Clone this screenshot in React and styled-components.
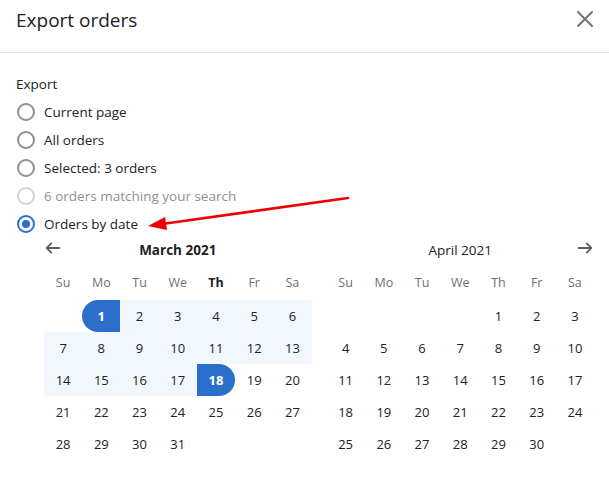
import React from 'react';
import styled, { createGlobalStyle, css } from 'styled-components';

const GlobalStyle = createGlobalStyle`
  body {
    margin: 0;
    background: #fff;
    font-family: "Open Sans", "Noto Sans", sans-serif;
    color: #202223;
  }
`;

const Modal = styled.div`
  position: relative;
  width: 609px;
  height: 484px;
  background: #fff;
  overflow: hidden;
`;

const Header = styled.div`
  display: flex;
  align-items: center;
  justify-content: space-between;
  height: 53px;
  padding: 0 16px;
  border-bottom: 1px solid #e1e3e5;
  box-sizing: border-box;
`;

const Title = styled.h2`
  margin: 0;
  font-size: 19px;
  font-weight: 400;
  color: #202223;
  line-height: 24px;
  margin-top: -13px;
`;

const CloseButton = styled.button`
  border: 0;
  background: none;
  padding: 0;
  width: 16px;
  height: 16px;
  margin-top: -15px;
  cursor: pointer;
  display: flex;
`;

const Body = styled.div`
  padding: 21px 15px 0 16px;
`;

const Label = styled.div`
  font-size: 13.5px;
  line-height: 20px;
  margin-bottom: 4px;
`;

const ChoiceList = styled.div`
  display: flex;
  flex-direction: column;
`;

const Choice = styled.label`
  display: flex;
  align-items: center;
  gap: 9px;
  height: 28px;
  font-size: 13.5px;
  color: ${p => (p.disabled ? '#8c9196' : '#202223')};
`;

const RadioCircle = styled.span`
  box-sizing: border-box;
  width: 18px;
  height: 18px;
  margin-left: 1px;
  border-radius: 50%;
  border: 2px solid ${p => (p.checked ? '#2c6ecb' : p.disabled ? '#d2d5d8' : '#8c9196')};
  display: flex;
  align-items: center;
  justify-content: center;
  &::after {
    content: '';
    width: 8px;
    height: 8px;
    border-radius: 50%;
    background: ${p => (p.checked ? '#2c6ecb' : 'transparent')};
  }
`;

const Calendar = styled.div`
  display: grid;
  grid-template-columns: 1fr 1fr;
  column-gap: 15px;
  padding: 0 0 0 28px;
`;

const Month = styled.div`
  display: flex;
  flex-direction: column;
`;

const MonthHeader = styled.div`
  display: flex;
  align-items: center;
  justify-content: space-between;
  height: 24px;
  margin-bottom: 2px;
`;

const MonthTitle = styled.div`
  flex: 1;
  text-align: center;
  font-size: 13.5px;
  font-weight: ${p => (p.current ? 700 : 400)};
`;

const NavButton = styled.button`
  border: 0;
  background: none;
  padding: 0;
  width: 18px;
  height: 18px;
  margin-top: -4px;
  display: flex;
  align-items: center;
  justify-content: center;
  cursor: pointer;
  visibility: ${p => (p.hidden ? 'hidden' : 'visible')};
`;

const Grid = styled.div`
  display: grid;
  grid-template-columns: repeat(7, 1fr);
`;

const Weekdays = styled(Grid)`
  margin-top: 6px;
  height: 24px;
  align-items: center;
`;

const Weekday = styled.div`
  text-align: center;
  font-size: 12.5px;
  color: ${p => (p.today ? '#202223' : '#6d7175')};
  font-weight: ${p => (p.today ? 700 : 400)};
`;

const Days = styled(Grid)`
  margin-top: 6px;
  grid-auto-rows: 32px;
`;

const Day = styled.div`
  display: flex;
  align-items: center;
  justify-content: center;
  font-size: 13px;
  color: #202223;
  ${p => p.inRange && css`background: #f2f7fe;`}
  ${p => (p.start || p.end) && css`
    background: #2c6ecb;
    color: #fff;
    font-weight: 700;
  `}
  ${p => p.start && css`border-radius: 16px 0 0 16px;`}
  ${p => p.end && css`border-radius: 0 16px 16px 0;`}
`;

const Annotation = styled.svg`
  position: absolute;
  left: 0;
  top: 0;
  pointer-events: none;
`;

const Arrow = ({ dir }) => (
  <svg width="18" height="18" viewBox="0 0 20 20" fill="#5c5f62">
    {dir === 'left' ? (
      <path d="M17 9H5.414l3.293-3.293a1 1 0 0 0-1.414-1.414l-5 5a1 1 0 0 0 0 1.414l5 5a1 1 0 0 0 1.414-1.414L5.414 11H17a1 1 0 1 0 0-2z" />
    ) : (
      <path d="M3 9h11.586l-3.293-3.293a1 1 0 0 1 1.414-1.414l5 5a1 1 0 0 1 0 1.414l-5 5a1 1 0 0 1-1.414-1.414L14.586 11H3a1 1 0 1 1 0-2z" />
    )}
  </svg>
);

const WEEKDAYS = ['Su', 'Mo', 'Tu', 'We', 'Th', 'Fr', 'Sa'];

const buildCells = (offset, count) => {
  const cells = [];
  for (let i = 0; i < offset; i++) cells.push(null);
  for (let d = 1; d <= count; d++) cells.push(d);
  return cells;
};

const MonthView = ({ title, offset, count, current, nav, range }) => (
  <Month>
    <MonthHeader>
      <NavButton hidden={nav !== 'left'}>
        <Arrow dir="left" />
      </NavButton>
      <MonthTitle current={current}>{title}</MonthTitle>
      <NavButton hidden={nav !== 'right'}>
        <Arrow dir="right" />
      </NavButton>
    </MonthHeader>
    <Weekdays>
      {WEEKDAYS.map(w => (
        <Weekday key={w} today={current && w === 'Th'}>{w}</Weekday>
      ))}
    </Weekdays>
    <Days>
      {buildCells(offset, count).map((d, i) => (
        <Day
          key={i}
          start={range && d === range[0]}
          end={range && d === range[1]}
          inRange={range && d > range[0] && d < range[1]}
        >
          {d}
        </Day>
      ))}
    </Days>
  </Month>
);

const choices = [
  { label: 'Current page' },
  { label: 'All orders' },
  { label: 'Selected: 3 orders' },
  { label: '6 orders matching your search', disabled: true },
  { label: 'Orders by date', checked: true },
];

export default function App() {
  return (
    <Modal>
      <GlobalStyle />
      <Header>
        <Title>Export orders</Title>
        <CloseButton aria-label="Close">
          <svg width="16" height="16" viewBox="0 0 16 16">
            <path d="M1 1L15 15M15 1L1 15" stroke="#6d7175" strokeWidth="1.8" strokeLinecap="round" />
          </svg>
        </CloseButton>
      </Header>
      <Body>
        <Label>Export</Label>
        <ChoiceList>
          {choices.map(c => (
            <Choice key={c.label} disabled={c.disabled}>
              <RadioCircle checked={c.checked} disabled={c.disabled} />
              {c.label}
            </Choice>
          ))}
        </ChoiceList>
        <Calendar>
          <MonthView title="March 2021" offset={1} count={31} current nav="left" range={[1, 18]} />
          <MonthView title="April 2021" offset={4} count={30} nav="right" />
        </Calendar>
      </Body>
      <Annotation width="609" height="484">
        <line x1="348" y1="198" x2="162" y2="224" stroke="#ee0000" strokeWidth="2.6" strokeLinecap="round" />
        <polygon points="148,226 165,217 167,230" fill="#ee0000" />
      </Annotation>
    </Modal>
  );
}
